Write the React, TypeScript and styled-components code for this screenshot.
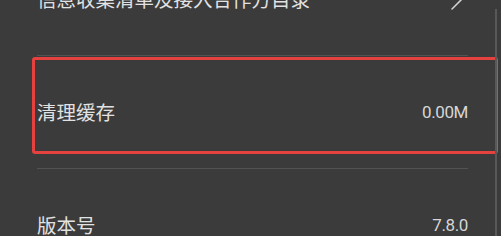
import React from "react";
import styled, { createGlobalStyle } from "styled-components";

const Global = createGlobalStyle`
  html, body { margin: 0; padding: 0; background: #3b3b3b; }
  body { width: 501px; height: 236px; overflow: hidden; }
`;

const Screen = styled.div`
  position: relative;
  width: 501px;
  height: 236px;
  overflow: hidden;
  background: #3b3b3b;
  font-family: "Noto Sans CJK SC", "Noto Sans", sans-serif;
`;

const List = styled.div`
  display: flex;
  flex-direction: column;
  margin-top: -57px;
  padding: 0 33px 0 37px;
`;

const Row = styled.div<{ $first?: boolean }>`
  position: relative;
  display: flex;
  align-items: center;
  justify-content: space-between;
  height: 112px;
  border-top: ${(p) => (p.$first ? "none" : "1px solid #535353")};
`;

const Label = styled.span`
  font-size: 19.5px;
  color: #e2e2e2;
  line-height: 1;
`;

const Value = styled.span`
  font-family: "Roboto", "Noto Sans", sans-serif;
  font-size: 17px;
  letter-spacing: -0.4px;
  color: #d6d6d6;
  line-height: 1;
`;

const Chevron = styled.svg`
  width: 14px;
  height: 22px;
  margin-right: 4px;
`;

const Highlight = styled.div`
  position: absolute;
  top: 1px;
  left: -5px;
  right: -30px;
  height: 97px;
  box-sizing: border-box;
  border: 3px solid #e4413f;
  border-radius: 3px;
  pointer-events: none;
`;

const ScrollBar = styled.div`
  position: absolute;
  top: 9px;
  bottom: 0;
  right: 4px;
  width: 2px;
  background: #585858;
`;

export default function App() {
  return (
    <>
      <Global />
      <Screen>
        <List>
          <Row $first>
            <Label>信息收集清单及接入合作方目录</Label>
            <Chevron viewBox="0 0 14 22" fill="none">
              <path d="M2 1 L12 11 L2 21" stroke="#d0d0d0" strokeWidth="1.6" strokeLinecap="round" strokeLinejoin="round" />
            </Chevron>
          </Row>
          <Row>
            <Label>清理缓存</Label>
            <Value>0.00M</Value>
            <Highlight />
          </Row>
          <Row>
            <Label>版本号</Label>
            <Value>7.8.0</Value>
          </Row>
        </List>
        <ScrollBar />
      </Screen>
    </>
  );
}
